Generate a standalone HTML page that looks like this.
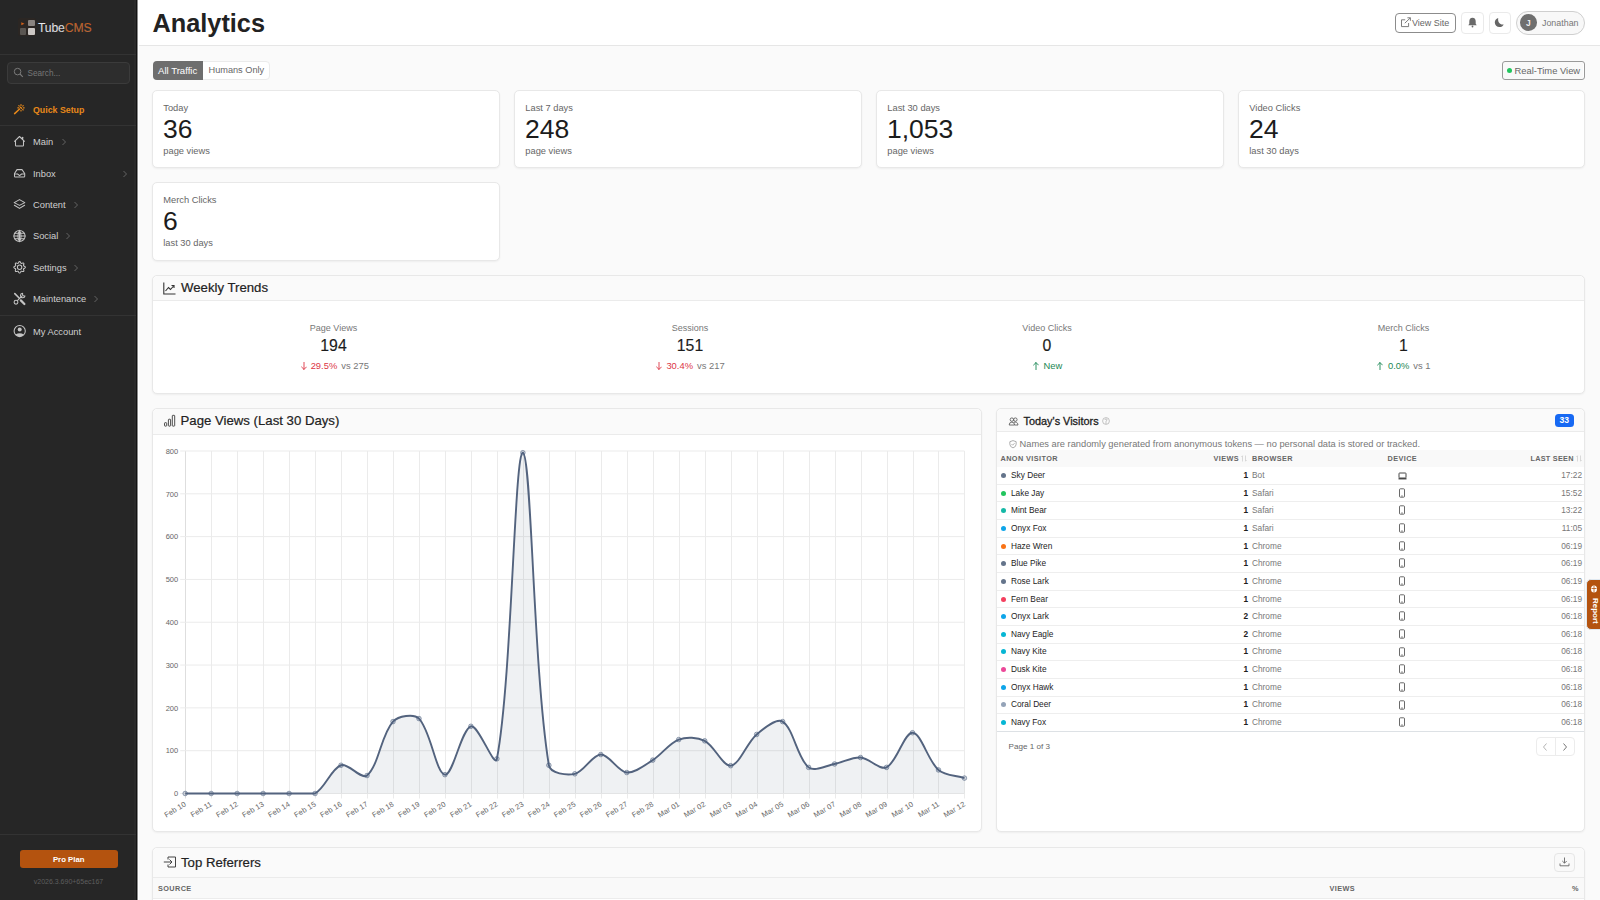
<!DOCTYPE html>
<html><head><meta charset="utf-8">
<style>
*{box-sizing:border-box;margin:0;padding:0}
html,body{width:1600px;height:900px;overflow:hidden;background:#fafafa;font-family:"Liberation Sans",sans-serif;color:#222}
.abs{position:absolute}
.t{position:absolute;white-space:nowrap;line-height:1}
#sb{position:absolute;left:0;top:0;width:137px;height:900px;background:#262626;border-right:1px solid #131313;box-shadow:inset -2px 0 0 #2a2a2a}
.sep{position:absolute;left:0;width:136px;height:1px;background:#333}
.nav{position:absolute;left:33px;font-size:9.3px;color:#cfcfcf;white-space:nowrap;line-height:1}
.nico{position:absolute;left:13px;width:13px;height:13px}
.chev{position:absolute;width:6px;height:8px}
#hdr{position:absolute;left:139px;top:0;width:1461px;height:46px;background:#fff;border-bottom:1px solid #e6e6e6}
.card{position:absolute;background:#fff;border:1px solid #e8e8e8;border-radius:5px;box-shadow:0 1px 2px rgba(0,0,0,0.05)}
.lbl{position:absolute;left:10.3px;font-size:9.3px;color:#666;line-height:1;white-space:nowrap}
.num{position:absolute;left:10px;font-size:26.5px;color:#1c1c1c;line-height:1;white-space:nowrap}
.chead{position:absolute;left:0;top:0;right:0;background:#fafafa;border-bottom:1px solid #ebebeb;border-radius:5px 5px 0 0}
.wk{position:absolute;width:200px;text-align:center;line-height:1;white-space:nowrap}
.wk2{position:absolute;width:200px;display:flex;justify-content:center;align-items:center;height:9px;font-size:9.4px;line-height:1;white-space:nowrap}
.row{position:absolute;left:-1px;width:587px;height:18px;border-bottom:1px solid #eeeeee}
.row .dot{position:absolute;left:3.5px;top:5.8px;width:5px;height:5px;border-radius:50%}
.row .nm{position:absolute;left:14px;top:3.8px;font-size:8.3px;color:#1d1d1d;line-height:1}
.row .vw{position:absolute;right:336px;top:3.8px;font-size:8.3px;color:#1d1d1d;font-weight:700;line-height:1}
.row .br{position:absolute;left:255px;top:3.8px;font-size:8.3px;color:#777;line-height:1}
.row .dv{position:absolute;left:401px;top:3px}
.row .dv svg{display:block}
.row .ls{position:absolute;right:2px;top:3.8px;font-size:8.3px;color:#777;line-height:1}
.th{position:absolute;top:5px;font-size:7.3px;font-weight:700;color:#666;letter-spacing:0.4px;line-height:1;white-space:nowrap}
</style></head><body>
<div id="sb">
  <!-- logo -->
  <div class="abs" style="left:18px;top:18px;width:18px;height:18px;background:#2b2623;border-radius:2px"></div>
  <div class="abs" style="left:20px;top:28px;width:6px;height:6.5px;background:#5a5652;border-radius:1px"></div>
  <div class="abs" style="left:28px;top:20px;width:6.5px;height:6px;background:#8a8480;border-radius:1px"></div>
  <div class="abs" style="left:28px;top:28px;width:6.5px;height:6.5px;background:#cbc7c4;border-radius:1px"></div>
  <svg class="abs" style="left:21px;top:21.5px" width="4" height="4" viewBox="0 0 4 4"><path d="M0.3,0.3 L3.5,1.7 L0.3,3.2Z" fill="#d0601a"/></svg>
  <div class="t" style="left:38px;top:21.8px;font-size:12.2px;letter-spacing:-0.15px;-webkit-text-stroke:0.15px #888"><span style="color:#ebebf0">Tube</span><span style="color:#c65a18">CMS</span></div>
  <div class="sep" style="top:54px"></div>
  <!-- search -->
  <div class="abs" style="left:7px;top:62px;width:123px;height:22px;background:#2d2d2d;border:1px solid #3b3b3b;border-radius:4px"></div>
  <svg class="abs" style="left:13px;top:67px" width="11" height="11" viewBox="0 0 11 11"><circle cx="4.6" cy="4.6" r="3.3" fill="none" stroke="#7a7a7a" stroke-width="1"/><path d="M7,7 L9.8,9.8" stroke="#7a7a7a" stroke-width="1.1"/></svg>
  <div class="t" style="left:27.5px;top:69.5px;font-size:8.2px;color:#777">Search...</div>
  <!-- nav -->
<svg class="abs" style="left:12px;top:102px" width="16" height="16" viewBox="12 102 16 16" fill="none" stroke="#e8891a" stroke-width="1.15" stroke-linecap="round"><path d="M14.6,113.6 L19.6,109" stroke-width="1.5"/><path d="M21,104.6 L21,105.4 M21,110.2 L21,111 M17.8,107.8 L18.6,107.8 M23.4,107.8 L24.2,107.8 M18.8,105.6 L19.3,106.1 M23.2,105.6 L22.7,106.1 M23.2,110 L22.7,109.5"/><path d="M20.4,107.3 L21.6,108.3" stroke-width="1.4"/></svg>
<div class="nav" style="top:105.5px;color:#e8891a;font-weight:700;font-size:8.8px">Quick Setup</div>
<div class="sep" style="top:125px"></div>
<svg class="abs" style="left:12px;top:134px" width="16" height="16" viewBox="12 134 16 16" stroke="#c4c4c4" stroke-width="1.05" fill="none" stroke-linecap="round" stroke-linejoin="round"><path d="M14.5,141.3 L19.5,136.5 L24.5,141.3"/><path d="M15.5,140.5 L15.5,145.3 Q15.5,146 16.2,146 L22.8,146 Q23.5,146 23.5,145.3 L23.5,140.5"/><path d="M22.6,137.3 L22.6,139.3" stroke-width="1.3"/></svg>
<div class="nav" style="top:137.5px">Main</div>
<svg class="chev" style="left:60.5px;top:137.5px" viewBox="0 0 6 8" fill="none" stroke="#6a6a6a" stroke-width="0.9"><path d="M1.5,1 L4.5,4 L1.5,7"/></svg>
<svg class="abs" style="left:12px;top:166px" width="16" height="16" viewBox="12 166 16 16" stroke="#c4c4c4" stroke-width="1.05" fill="none" stroke-linecap="round" stroke-linejoin="round"><path d="M14.5,173.5 L17,169.6 L22,169.6 L24.7,173.5 L24.7,176.2 Q24.7,177 23.9,177 L15.3,177 Q14.5,177 14.5,176.2 Z"/><path d="M14.8,174 L17.6,174 L19.6,175.6 L21.6,174 L24.4,174"/></svg>
<div class="nav" style="top:169.5px">Inbox</div>
<svg class="chev" style="left:122px;top:169.5px" viewBox="0 0 6 8" fill="none" stroke="#6a6a6a" stroke-width="0.9"><path d="M1.5,1 L4.5,4 L1.5,7"/></svg>
<svg class="abs" style="left:12px;top:197px" width="16" height="16" viewBox="12 197 16 16" stroke="#c4c4c4" stroke-width="1.05" fill="none" stroke-linecap="round" stroke-linejoin="round"><path d="M19.5,199.6 L24.8,202.6 L19.5,205.4 L14.2,202.6 Z"/><path d="M14.4,205.3 L19.5,208.4 L24.6,205.3"/></svg>
<div class="nav" style="top:201px">Content</div>
<svg class="chev" style="left:72.5px;top:201px" viewBox="0 0 6 8" fill="none" stroke="#6a6a6a" stroke-width="0.9"><path d="M1.5,1 L4.5,4 L1.5,7"/></svg>
<svg class="abs" style="left:12px;top:228px" width="16" height="16" viewBox="12 228 16 16" stroke="#c4c4c4" stroke-width="1.05" fill="none" stroke-linecap="round" stroke-linejoin="round"><circle cx="19.5" cy="236" r="5.6"/><path d="M13.9,236 L25.1,236 M19.5,230.4 L19.5,241.6 M14.6,233.3 L24.4,233.3 M14.6,238.7 L24.4,238.7"/><path d="M19.5,230.4 Q16.3,236 19.5,241.6 M19.5,230.4 Q22.7,236 19.5,241.6"/></svg>
<div class="nav" style="top:232px">Social</div>
<svg class="chev" style="left:64.5px;top:232px" viewBox="0 0 6 8" fill="none" stroke="#6a6a6a" stroke-width="0.9"><path d="M1.5,1 L4.5,4 L1.5,7"/></svg>
<svg class="abs" style="left:12px;top:259px" width="16" height="16" viewBox="12 259 16 16" stroke="#c4c4c4" stroke-width="1.05" fill="none" stroke-linecap="round" stroke-linejoin="round"><path d="M19.60,261.55 L19.82,261.59 L20.04,261.71 L20.24,261.90 L20.42,262.13 L20.58,262.40 L20.71,262.66 L20.84,262.91 L20.96,263.12 L21.08,263.28 L21.23,263.37 L21.39,263.41 L21.59,263.39 L21.83,263.32 L22.09,263.23 L22.38,263.14 L22.68,263.07 L22.97,263.03 L23.24,263.04 L23.48,263.10 L23.67,263.23 L23.80,263.42 L23.86,263.66 L23.87,263.93 L23.83,264.22 L23.76,264.52 L23.67,264.81 L23.58,265.07 L23.51,265.31 L23.49,265.51 L23.53,265.67 L23.62,265.82 L23.78,265.94 L23.99,266.06 L24.24,266.19 L24.50,266.32 L24.77,266.48 L25.00,266.66 L25.19,266.86 L25.31,267.08 L25.35,267.30 L25.31,267.52 L25.19,267.74 L25.00,267.94 L24.77,268.12 L24.50,268.28 L24.24,268.41 L23.99,268.54 L23.78,268.66 L23.62,268.78 L23.53,268.93 L23.49,269.09 L23.51,269.29 L23.58,269.53 L23.67,269.79 L23.76,270.08 L23.83,270.38 L23.87,270.67 L23.86,270.94 L23.80,271.18 L23.67,271.37 L23.48,271.50 L23.24,271.56 L22.97,271.57 L22.68,271.53 L22.38,271.46 L22.09,271.37 L21.83,271.28 L21.59,271.21 L21.39,271.19 L21.23,271.23 L21.08,271.32 L20.96,271.48 L20.84,271.69 L20.71,271.94 L20.58,272.20 L20.42,272.47 L20.24,272.70 L20.04,272.89 L19.82,273.01 L19.60,273.05 L19.38,273.01 L19.16,272.89 L18.96,272.70 L18.78,272.47 L18.62,272.20 L18.49,271.94 L18.36,271.69 L18.24,271.48 L18.12,271.32 L17.97,271.23 L17.81,271.19 L17.61,271.21 L17.37,271.28 L17.11,271.37 L16.82,271.46 L16.52,271.53 L16.23,271.57 L15.96,271.56 L15.72,271.50 L15.53,271.37 L15.40,271.18 L15.34,270.94 L15.33,270.67 L15.37,270.38 L15.44,270.08 L15.53,269.79 L15.62,269.53 L15.69,269.29 L15.71,269.09 L15.67,268.93 L15.58,268.78 L15.42,268.66 L15.21,268.54 L14.96,268.41 L14.70,268.28 L14.43,268.12 L14.20,267.94 L14.01,267.74 L13.89,267.52 L13.85,267.30 L13.89,267.08 L14.01,266.86 L14.20,266.66 L14.43,266.48 L14.70,266.32 L14.96,266.19 L15.21,266.06 L15.42,265.94 L15.58,265.82 L15.67,265.67 L15.71,265.51 L15.69,265.31 L15.62,265.07 L15.53,264.81 L15.44,264.52 L15.37,264.22 L15.33,263.93 L15.34,263.66 L15.40,263.42 L15.53,263.23 L15.72,263.10 L15.96,263.04 L16.23,263.03 L16.52,263.07 L16.82,263.14 L17.11,263.23 L17.37,263.32 L17.61,263.39 L17.81,263.41 L17.97,263.37 L18.12,263.28 L18.24,263.12 L18.36,262.91 L18.49,262.66 L18.62,262.40 L18.78,262.13 L18.96,261.90 L19.16,261.71 L19.38,261.59 L19.60,261.55Z"/><circle cx="19.6" cy="267.3" r="2.2"/></svg>
<div class="nav" style="top:263.5px">Settings</div>
<svg class="chev" style="left:73px;top:263.5px" viewBox="0 0 6 8" fill="none" stroke="#6a6a6a" stroke-width="0.9"><path d="M1.5,1 L4.5,4 L1.5,7"/></svg>
<svg class="abs" style="left:12px;top:290px" width="16" height="16" viewBox="12 290 16 16" stroke="#c4c4c4" stroke-width="1.05" fill="none" stroke-linecap="round" stroke-linejoin="round"><path d="M14.8,293.6 L19.4,298.2" stroke-width="1.6"/><path d="M20.8,300.4 L24.4,304" stroke-width="2.2"/><path d="M17.6,300.4 L22.2,295.8"/><circle cx="16" cy="302.2" r="1.9"/><path d="M22.6,293.2 A2.3,2.3 0 1 0 25,296 L23.6,296 L22.6,295 Z"/></svg>
<div class="nav" style="top:295px">Maintenance</div>
<svg class="chev" style="left:93px;top:295px" viewBox="0 0 6 8" fill="none" stroke="#6a6a6a" stroke-width="0.9"><path d="M1.5,1 L4.5,4 L1.5,7"/></svg>
<div class="sep" style="top:315px"></div>
<svg class="abs" style="left:12px;top:323px" width="16" height="16" viewBox="12 323 16 16"><circle cx="19.7" cy="331" r="5.6" fill="none" stroke="#c4c4c4" stroke-width="1.05"/><circle cx="19.7" cy="329.6" r="2" fill="#c4c4c4"/><path d="M15.6,334.6 Q19.7,331.8 23.8,334.6 Q22.2,336.7 19.7,336.7 Q17.2,336.7 15.6,334.6 Z" fill="#c4c4c4"/></svg>
<div class="nav" style="top:327.5px">My Account</div>
  <!-- footer -->
  <div class="sep" style="top:834px"></div>
  <div class="abs" style="left:20px;top:850px;width:97.5px;height:17.5px;background:#b4530f;border-radius:3px"></div>
  <div class="t" style="left:20px;width:97.5px;text-align:center;top:855.8px;font-size:7.8px;font-weight:700;color:#fff">Pro Plan</div>
  <div class="t" style="left:0;width:137px;text-align:center;top:877.5px;font-size:7px;color:#5e5e5e">v2026.3.690+65ec167</div>
</div>

<div id="hdr">
  <div class="t" style="left:13.5px;top:10.8px;font-size:25.3px;font-weight:700;color:#222">Analytics</div>
  <!-- view site -->
  <div class="abs" style="left:1256px;top:13px;width:61px;height:20px;border:1.3px solid #8c8c8c;border-radius:4px;background:#fff"></div>
  <svg class="abs" style="left:1260.5px;top:17px" width="12" height="11" viewBox="0 0 12 11" fill="none" stroke="#777" stroke-width="0.95"><path d="M5.2,2.8 L1.5,2.8 L1.5,9.6 L8.6,9.6 L8.6,6"/><path d="M4.8,6.2 L10.3,0.9 M7.4,0.8 L10.4,0.8 L10.4,3.8"/></svg>
  <div class="t" style="left:1273px;top:18.5px;font-size:9px;color:#666">View Site</div>
  <!-- bell -->
  <div class="abs" style="left:1322px;top:11.5px;width:22.5px;height:22px;border:1px solid #eaeaea;border-radius:4px;background:#fff"></div>
  <svg class="abs" style="left:1328px;top:17px" width="11" height="11" viewBox="0 0 11 11"><path d="M5.5,0.8 C3.3,0.8 2.3,2.5 2.3,4.5 L2.3,6.8 L1.3,8.2 L9.7,8.2 L8.7,6.8 L8.7,4.5 C8.7,2.5 7.7,0.8 5.5,0.8Z" fill="#6a6a6a"/><circle cx="5.5" cy="9.5" r="0.9" fill="#6a6a6a"/></svg>
  <!-- moon -->
  <div class="abs" style="left:1350px;top:11.5px;width:22px;height:22px;border:1px solid #eaeaea;border-radius:4px;background:#fff"></div>
  <svg class="abs" style="left:1355px;top:17px" width="11" height="11" viewBox="0 0 11 11"><path d="M4.2,1 C2,1.6 0.8,3.5 0.8,5.6 C0.8,8.3 2.9,10.1 5.4,10.1 C7.4,10.1 9,9 9.7,7.4 C6.6,8.2 3.5,5.8 4.2,1Z" fill="#666"/></svg>
  <!-- user pill -->
  <div class="abs" style="left:1377px;top:10.5px;width:69px;height:24px;border:1.3px solid #cfcfcf;border-radius:12px;background:#f8f8f8"></div>
  <div class="abs" style="left:1380.5px;top:14px;width:17.5px;height:17px;border-radius:50%;background:#6f6f6f"></div>
  <div class="t" style="left:1380.5px;width:17.5px;text-align:center;top:18.5px;font-size:8.5px;font-weight:700;color:#eee">J</div>
  <div class="t" style="left:1403px;top:18.8px;font-size:8.9px;color:#777">Jonathan</div>
</div>

<div class="abs" style="left:137px;top:0;width:1px;height:900px;background:#8a8a8a"></div>
<div class="abs" style="left:138px;top:0;width:1px;height:900px;background:#fff"></div>
<!-- filters -->
<div class="abs" style="left:152.5px;top:60.5px;width:117px;height:19.5px;border:1px solid #ebebeb;border-radius:4px;background:#fff"></div>
<div class="abs" style="left:152.5px;top:60.5px;width:50.5px;height:19.5px;background:#6e6e6e;border-radius:4px 0 0 4px"></div>
<div class="t" style="left:158px;top:65.5px;font-size:9.6px;color:#fff">All Traffic</div>
<div class="t" style="left:208.5px;top:66.2px;font-size:9.2px;color:#666">Humans Only</div>
<!-- real-time -->
<div class="abs" style="left:1502px;top:61px;width:83px;height:19px;border:1.2px solid #9a9a9a;border-radius:3px;background:#f9f9f9;box-shadow:inset -1px 0 0 #fff"></div>
<div class="abs" style="left:1507px;top:68px;width:5px;height:5px;border-radius:50%;background:#22c55e"></div>
<div class="t" style="left:1514.5px;top:66px;font-size:9.4px;color:#666">Real-Time View</div>

<!-- stat cards -->
<div class="card" style="left:152px;top:90px;width:348px;height:78px">
  <div class="lbl" style="top:13px">Today</div><div class="num" style="top:24.5px">36</div><div class="lbl" style="top:56px">page views</div></div>
<div class="card" style="left:514px;top:90px;width:348px;height:78px">
  <div class="lbl" style="top:13px">Last 7 days</div><div class="num" style="top:24.5px">248</div><div class="lbl" style="top:56px">page views</div></div>
<div class="card" style="left:876px;top:90px;width:348px;height:78px">
  <div class="lbl" style="top:13px">Last 30 days</div><div class="num" style="top:24.5px">1,053</div><div class="lbl" style="top:56px">page views</div></div>
<div class="card" style="left:1238px;top:90px;width:347px;height:78px">
  <div class="lbl" style="top:13px">Video Clicks</div><div class="num" style="top:24.5px">24</div><div class="lbl" style="top:56px">last 30 days</div></div>
<div class="card" style="left:152px;top:182px;width:348px;height:79px">
  <div class="lbl" style="top:13px">Merch Clicks</div><div class="num" style="top:24.5px">6</div><div class="lbl" style="top:56px">last 30 days</div></div>

<!-- weekly trends -->
<div class="card" style="left:152px;top:275px;width:1433px;height:119px"><div class="chead" style="height:25px"></div></div>
<svg class="abs" style="left:163px;top:282px" width="13" height="13" viewBox="0 0 13 13" fill="none" stroke="#333" stroke-width="1.1"><path d="M0.8,0.5 L0.8,12 L12.5,12"/><path d="M2.5,9 L5.5,5.5 L7.5,7.5 L11,3.5"/><path d="M8.5,3.5 L11,3.5 L11,6"/></svg>
<div class="t" style="left:181px;top:280.5px;font-size:13.2px;color:#222;-webkit-text-stroke:0.2px #222">Weekly Trends</div>
<div class="wk" style="left:233.5px;top:324px;font-size:9px;color:#777">Page Views</div>
<div class="wk" style="left:233.5px;top:338px;font-size:15.8px;color:#1c1c1c;-webkit-text-stroke:0.15px #1c1c1c">194</div>
<div class="wk2" style="left:234.75px;top:361px"><svg width="6" height="8" viewBox="0 0 6 8" style="display:block;margin-right:4px" fill="none" stroke="#dc3545" stroke-width="0.9" stroke-linecap="round"><path d="M3,0.4 L3,7.4 M0.6,5 L3,7.4 L5.4,5"/></svg><span style="color:#dc3545">29.5%</span><span style="color:#777;margin-left:4px">vs 275</span></div>
<div class="wk" style="left:590px;top:324px;font-size:9px;color:#777">Sessions</div>
<div class="wk" style="left:590px;top:338px;font-size:15.8px;color:#1c1c1c;-webkit-text-stroke:0.15px #1c1c1c">151</div>
<div class="wk2" style="left:590.5px;top:361px"><svg width="6" height="8" viewBox="0 0 6 8" style="display:block;margin-right:4px" fill="none" stroke="#dc3545" stroke-width="0.9" stroke-linecap="round"><path d="M3,0.4 L3,7.4 M0.6,5 L3,7.4 L5.4,5"/></svg><span style="color:#dc3545">30.4%</span><span style="color:#777;margin-left:4px">vs 217</span></div>
<div class="wk" style="left:947px;top:324px;font-size:9px;color:#777">Video Clicks</div>
<div class="wk" style="left:947px;top:338px;font-size:15.8px;color:#1c1c1c;-webkit-text-stroke:0.15px #1c1c1c">0</div>
<div class="wk2" style="left:947.7px;top:361px"><svg width="6" height="8" viewBox="0 0 6 8" style="display:block;margin-right:4.5px" fill="none" stroke="#198754" stroke-width="0.9" stroke-linecap="round"><path d="M3,7.6 L3,0.6 M0.6,3 L3,0.6 L5.4,3"/></svg><span style="color:#198754">New</span></div>
<div class="wk" style="left:1303.5px;top:324px;font-size:9px;color:#777">Merch Clicks</div>
<div class="wk" style="left:1303.5px;top:338px;font-size:15.8px;color:#1c1c1c;-webkit-text-stroke:0.15px #1c1c1c">1</div>
<div class="wk2" style="left:1304px;top:361px"><svg width="6" height="8" viewBox="0 0 6 8" style="display:block;margin-right:4.5px" fill="none" stroke="#198754" stroke-width="0.9" stroke-linecap="round"><path d="M3,7.6 L3,0.6 M0.6,3 L3,0.6 L5.4,3"/></svg><span style="color:#198754">0.0%</span><span style="color:#777;margin-left:4px">vs 1</span></div>

<!-- chart card -->
<div class="card" style="left:152px;top:408px;width:830px;height:424px"><div class="chead" style="height:26px"></div></div>
<svg class="abs" style="left:163px;top:414px" width="13" height="13" viewBox="0 0 13 13" fill="none" stroke="#3a3a3a" stroke-width="0.9"><rect x="1.5" y="8.7" width="2.2" height="3.4" rx="0.6"/><rect x="5.4" y="5.2" width="2.2" height="6.9" rx="0.6"/><rect x="9.3" y="1.3" width="2.4" height="10.8" rx="0.6"/></svg>
<div class="t" style="left:180.5px;top:414px;font-size:13.2px;color:#222;-webkit-text-stroke:0.2px #222">Page Views (Last 30 Days)</div>
<svg class="abs" style="left:0;top:0" width="1600" height="900" viewBox="0 0 1600 900">
<g stroke="#ebebeb" stroke-width="1"><line x1="185.50" y1="451.00" x2="185.50" y2="798.50" stroke="#dedede"/><line x1="211.50" y1="451.00" x2="211.50" y2="798.50"/><line x1="237.50" y1="451.00" x2="237.50" y2="798.50"/><line x1="263.50" y1="451.00" x2="263.50" y2="798.50"/><line x1="289.50" y1="451.00" x2="289.50" y2="798.50"/><line x1="315.50" y1="451.00" x2="315.50" y2="798.50"/><line x1="341.50" y1="451.00" x2="341.50" y2="798.50"/><line x1="367.50" y1="451.00" x2="367.50" y2="798.50"/><line x1="393.50" y1="451.00" x2="393.50" y2="798.50"/><line x1="419.50" y1="451.00" x2="419.50" y2="798.50"/><line x1="445.50" y1="451.00" x2="445.50" y2="798.50"/><line x1="471.50" y1="451.00" x2="471.50" y2="798.50"/><line x1="497.50" y1="451.00" x2="497.50" y2="798.50"/><line x1="523.50" y1="451.00" x2="523.50" y2="798.50"/><line x1="549.50" y1="451.00" x2="549.50" y2="798.50"/><line x1="575.50" y1="451.00" x2="575.50" y2="798.50"/><line x1="601.50" y1="451.00" x2="601.50" y2="798.50"/><line x1="627.50" y1="451.00" x2="627.50" y2="798.50"/><line x1="653.50" y1="451.00" x2="653.50" y2="798.50"/><line x1="679.50" y1="451.00" x2="679.50" y2="798.50"/><line x1="705.50" y1="451.00" x2="705.50" y2="798.50"/><line x1="731.50" y1="451.00" x2="731.50" y2="798.50"/><line x1="757.50" y1="451.00" x2="757.50" y2="798.50"/><line x1="783.50" y1="451.00" x2="783.50" y2="798.50"/><line x1="809.50" y1="451.00" x2="809.50" y2="798.50"/><line x1="835.50" y1="451.00" x2="835.50" y2="798.50"/><line x1="861.50" y1="451.00" x2="861.50" y2="798.50"/><line x1="887.50" y1="451.00" x2="887.50" y2="798.50"/><line x1="913.50" y1="451.00" x2="913.50" y2="798.50"/><line x1="938.50" y1="451.00" x2="938.50" y2="798.50"/><line x1="964.50" y1="451.00" x2="964.50" y2="798.50"/><line x1="180.20" y1="793.50" x2="964.45" y2="793.50"/><line x1="180.20" y1="750.69" x2="964.45" y2="750.69"/><line x1="180.20" y1="707.88" x2="964.45" y2="707.88"/><line x1="180.20" y1="665.06" x2="964.45" y2="665.06"/><line x1="180.20" y1="622.25" x2="964.45" y2="622.25"/><line x1="180.20" y1="579.44" x2="964.45" y2="579.44"/><line x1="180.20" y1="536.63" x2="964.45" y2="536.63"/><line x1="180.20" y1="493.82" x2="964.45" y2="493.82"/><line x1="180.20" y1="451.00" x2="964.45" y2="451.00"/></g>
<path d="M185.20,793.50 C193.77,793.50 202.60,793.50 211.17,793.50 C219.75,793.50 228.58,793.50 237.15,793.50 C245.72,793.50 254.55,793.50 263.12,793.50 C271.70,793.50 280.53,793.50 289.10,793.50 C297.67,793.50 308.16,793.50 315.07,793.50 C325.30,787.94 331.13,768.68 341.05,765.24 C348.27,762.74 361.57,780.10 367.02,775.52 C378.71,765.69 381.07,734.65 393.00,721.58 C398.21,715.86 413.88,713.37 418.98,718.58 C431.02,730.89 435.87,773.32 444.95,774.66 C453.02,775.86 461.17,729.26 470.93,726.29 C478.32,724.03 494.85,769.60 496.90,758.82 C512.00,679.32 514.39,451.67 522.88,452.72 C531.54,453.79 533.08,667.78 548.85,765.24 C550.23,773.74 566.97,775.42 574.83,773.81 C584.11,771.89 592.13,754.76 600.80,754.54 C609.27,754.33 617.81,771.56 626.78,772.52 C634.95,773.40 644.78,765.17 652.75,760.11 C661.92,754.29 669.12,743.12 678.73,739.56 C686.27,736.76 697.50,737.22 704.70,740.84 C714.65,745.84 722.63,766.67 730.67,765.67 C739.77,764.55 746.64,742.91 756.65,734.42 C763.79,728.36 776.54,717.71 782.62,721.58 C793.68,728.59 797.15,758.04 808.60,767.38 C814.30,772.03 826.09,765.57 834.58,763.96 C843.24,762.32 852.14,756.98 860.55,757.54 C869.28,758.11 879.83,770.59 886.53,767.38 C896.97,762.39 904.13,732.29 912.50,732.71 C921.27,733.14 927.76,760.59 938.48,769.95 C944.90,775.57 955.88,775.40 964.45,778.09 L964.45,793.5 L185.20,793.5 Z" fill="rgba(74,95,126,0.09)"/>
<path d="M185.20,793.50 C193.77,793.50 202.60,793.50 211.17,793.50 C219.75,793.50 228.58,793.50 237.15,793.50 C245.72,793.50 254.55,793.50 263.12,793.50 C271.70,793.50 280.53,793.50 289.10,793.50 C297.67,793.50 308.16,793.50 315.07,793.50 C325.30,787.94 331.13,768.68 341.05,765.24 C348.27,762.74 361.57,780.10 367.02,775.52 C378.71,765.69 381.07,734.65 393.00,721.58 C398.21,715.86 413.88,713.37 418.98,718.58 C431.02,730.89 435.87,773.32 444.95,774.66 C453.02,775.86 461.17,729.26 470.93,726.29 C478.32,724.03 494.85,769.60 496.90,758.82 C512.00,679.32 514.39,451.67 522.88,452.72 C531.54,453.79 533.08,667.78 548.85,765.24 C550.23,773.74 566.97,775.42 574.83,773.81 C584.11,771.89 592.13,754.76 600.80,754.54 C609.27,754.33 617.81,771.56 626.78,772.52 C634.95,773.40 644.78,765.17 652.75,760.11 C661.92,754.29 669.12,743.12 678.73,739.56 C686.27,736.76 697.50,737.22 704.70,740.84 C714.65,745.84 722.63,766.67 730.67,765.67 C739.77,764.55 746.64,742.91 756.65,734.42 C763.79,728.36 776.54,717.71 782.62,721.58 C793.68,728.59 797.15,758.04 808.60,767.38 C814.30,772.03 826.09,765.57 834.58,763.96 C843.24,762.32 852.14,756.98 860.55,757.54 C869.28,758.11 879.83,770.59 886.53,767.38 C896.97,762.39 904.13,732.29 912.50,732.71 C921.27,733.14 927.76,760.59 938.48,769.95 C944.90,775.57 955.88,775.40 964.45,778.09" fill="none" stroke="#53637e" stroke-width="1.9"/>
<g fill="rgba(74,95,126,0.25)" stroke="rgba(74,95,126,0.55)" stroke-width="1"><circle cx="185.20" cy="793.50" r="2.3"/><circle cx="211.17" cy="793.50" r="2.3"/><circle cx="237.15" cy="793.50" r="2.3"/><circle cx="263.12" cy="793.50" r="2.3"/><circle cx="289.10" cy="793.50" r="2.3"/><circle cx="315.07" cy="793.50" r="2.3"/><circle cx="341.05" cy="765.24" r="2.3"/><circle cx="367.02" cy="775.52" r="2.3"/><circle cx="393.00" cy="721.58" r="2.3"/><circle cx="418.98" cy="718.58" r="2.3"/><circle cx="444.95" cy="774.66" r="2.3"/><circle cx="470.93" cy="726.29" r="2.3"/><circle cx="496.90" cy="758.82" r="2.3"/><circle cx="522.88" cy="452.72" r="2.3"/><circle cx="548.85" cy="765.24" r="2.3"/><circle cx="574.83" cy="773.81" r="2.3"/><circle cx="600.80" cy="754.54" r="2.3"/><circle cx="626.78" cy="772.52" r="2.3"/><circle cx="652.75" cy="760.11" r="2.3"/><circle cx="678.73" cy="739.56" r="2.3"/><circle cx="704.70" cy="740.84" r="2.3"/><circle cx="730.67" cy="765.67" r="2.3"/><circle cx="756.65" cy="734.42" r="2.3"/><circle cx="782.62" cy="721.58" r="2.3"/><circle cx="808.60" cy="767.38" r="2.3"/><circle cx="834.58" cy="763.96" r="2.3"/><circle cx="860.55" cy="757.54" r="2.3"/><circle cx="886.53" cy="767.38" r="2.3"/><circle cx="912.50" cy="732.71" r="2.3"/><circle cx="938.48" cy="769.95" r="2.3"/><circle cx="964.45" cy="778.09" r="2.3"/></g>
<g font-family="Liberation Sans" font-size="7.5" fill="#666"><text x="178.20" y="796.30" text-anchor="end">0</text><text x="178.20" y="753.49" text-anchor="end">100</text><text x="178.20" y="710.68" text-anchor="end">200</text><text x="178.20" y="667.86" text-anchor="end">300</text><text x="178.20" y="625.05" text-anchor="end">400</text><text x="178.20" y="582.24" text-anchor="end">500</text><text x="178.20" y="539.43" text-anchor="end">600</text><text x="178.20" y="496.62" text-anchor="end">700</text><text x="178.20" y="453.80" text-anchor="end">800</text></g>
<g font-family="Liberation Sans" font-size="7.5" fill="#666" letter-spacing="0.1"><text transform="translate(186.70,805.50) rotate(-31)" text-anchor="end">Feb 10</text><text transform="translate(212.67,805.50) rotate(-31)" text-anchor="end">Feb 11</text><text transform="translate(238.65,805.50) rotate(-31)" text-anchor="end">Feb 12</text><text transform="translate(264.62,805.50) rotate(-31)" text-anchor="end">Feb 13</text><text transform="translate(290.60,805.50) rotate(-31)" text-anchor="end">Feb 14</text><text transform="translate(316.57,805.50) rotate(-31)" text-anchor="end">Feb 15</text><text transform="translate(342.55,805.50) rotate(-31)" text-anchor="end">Feb 16</text><text transform="translate(368.52,805.50) rotate(-31)" text-anchor="end">Feb 17</text><text transform="translate(394.50,805.50) rotate(-31)" text-anchor="end">Feb 18</text><text transform="translate(420.48,805.50) rotate(-31)" text-anchor="end">Feb 19</text><text transform="translate(446.45,805.50) rotate(-31)" text-anchor="end">Feb 20</text><text transform="translate(472.43,805.50) rotate(-31)" text-anchor="end">Feb 21</text><text transform="translate(498.40,805.50) rotate(-31)" text-anchor="end">Feb 22</text><text transform="translate(524.38,805.50) rotate(-31)" text-anchor="end">Feb 23</text><text transform="translate(550.35,805.50) rotate(-31)" text-anchor="end">Feb 24</text><text transform="translate(576.33,805.50) rotate(-31)" text-anchor="end">Feb 25</text><text transform="translate(602.30,805.50) rotate(-31)" text-anchor="end">Feb 26</text><text transform="translate(628.28,805.50) rotate(-31)" text-anchor="end">Feb 27</text><text transform="translate(654.25,805.50) rotate(-31)" text-anchor="end">Feb 28</text><text transform="translate(680.23,805.50) rotate(-31)" text-anchor="end">Mar 01</text><text transform="translate(706.20,805.50) rotate(-31)" text-anchor="end">Mar 02</text><text transform="translate(732.17,805.50) rotate(-31)" text-anchor="end">Mar 03</text><text transform="translate(758.15,805.50) rotate(-31)" text-anchor="end">Mar 04</text><text transform="translate(784.12,805.50) rotate(-31)" text-anchor="end">Mar 05</text><text transform="translate(810.10,805.50) rotate(-31)" text-anchor="end">Mar 06</text><text transform="translate(836.08,805.50) rotate(-31)" text-anchor="end">Mar 07</text><text transform="translate(862.05,805.50) rotate(-31)" text-anchor="end">Mar 08</text><text transform="translate(888.03,805.50) rotate(-31)" text-anchor="end">Mar 09</text><text transform="translate(914.00,805.50) rotate(-31)" text-anchor="end">Mar 10</text><text transform="translate(939.98,805.50) rotate(-31)" text-anchor="end">Mar 11</text><text transform="translate(965.95,805.50) rotate(-31)" text-anchor="end">Mar 12</text></g>
</svg>

<!-- visitors card -->
<div class="card" style="left:996px;top:408px;width:589px;height:424px">
  <div class="chead" style="height:23px"></div>
<div class="abs" style="left:1px;top:0;width:586px;height:422px">
  <svg class="abs" style="left:9.5px;top:7.5px" width="11" height="9" viewBox="0 0 12 11" fill="none" stroke="#444" stroke-width="0.9"><circle cx="4" cy="3.2" r="2.1"/><circle cx="8.3" cy="3.2" r="2.1"/><path d="M0.7,9.8 Q0.7,6.3 4,6.3 Q7.3,6.3 7.3,9.8 Z"/><path d="M6.5,6.5 Q8.3,6.1 9.5,6.5 Q11.5,7.3 11.5,9.8 L7.5,9.8"/></svg>
  <div class="t" style="left:25.5px;top:6.7px;font-size:10.9px;color:#222;-webkit-text-stroke:0.3px #222">Today's Visitors</div>
  <svg class="abs" style="left:104px;top:8px" width="8" height="8" viewBox="0 0 8 8" fill="none" stroke="#aaa" stroke-width="0.7"><circle cx="4" cy="4" r="3.4"/><path d="M2.9,3 Q2.9,1.9 4,1.9 Q5.1,1.9 5.1,2.9 Q5.1,3.6 4,4 L4,4.9"/><circle cx="4" cy="6" r="0.3" fill="#aaa"/></svg>
  <div class="abs" style="left:556.5px;top:5px;width:19.5px;height:12.5px;border-radius:3.5px;background:#1769f3"></div>
  <div class="t" style="left:556.5px;width:19.5px;text-align:center;top:7px;font-size:8.6px;color:#fff;font-weight:700">33</div>
  <svg class="abs" style="left:10.5px;top:31px" width="8" height="8.5" viewBox="0 0 9 10" fill="none" stroke="#888" stroke-width="0.8"><path d="M4.5,0.7 L8.2,2 L8.2,5 Q8.2,8 4.5,9.3 Q0.8,8 0.8,5 L0.8,2 Z"/><path d="M2.8,4.9 L4,6.1 L6.3,3.8"/></svg>
  <div class="t" style="left:21.5px;top:31px;font-size:9.3px;color:#777">Names are randomly generated from anonymous tokens — no personal data is stored or tracked.</div>
  <div class="abs" style="left:-1px;top:41px;width:587px;height:17px;background:#f9f9f9"></div>
  <div class="th" style="left:2.5px;top:46px">ANON VISITOR</div>
  <div class="th" style="left:215.5px;top:46px">VIEWS</div>
  <svg class="abs" style="left:243px;top:45.5px" width="6" height="7" viewBox="0 0 6 7" fill="none" stroke="#ccc" stroke-width="0.7"><path d="M1.5,6.5 L1.5,0.8 L0.3,2 M4.5,0.5 L4.5,6.2 L5.7,5"/></svg>
  <div class="th" style="left:254px;top:46px">BROWSER</div>
  <div class="th" style="left:389.5px;top:46px">DEVICE</div>
  <div class="th" style="left:532.5px;top:46px;letter-spacing:0.25px">LAST SEEN</div>
  <svg class="abs" style="left:578px;top:45.5px" width="6" height="7" viewBox="0 0 6 7" fill="none" stroke="#ccc" stroke-width="0.7"><path d="M1.5,6.5 L1.5,0.8 L0.3,2 M4.5,0.5 L4.5,6.2 L5.7,5"/></svg>
  <div class="row" style="top:58.10px;height:17.66px"><div class="dot" style="background:#64748b"></div><div class="nm">Sky Deer</div><div class="vw">1</div><div class="br">Bot</div><div class="dv"><svg style="margin-top:1.5px" width="9" height="8" viewBox="0 0 9 8" fill="none" stroke="#333" stroke-width="0.9"><rect x="1" y="1" width="7" height="5" rx="0.6"/><path d="M0.5,6.8 L8.5,6.8" stroke-width="1.2"/></svg></div><div class="ls">17:22</div></div>
<div class="row" style="top:75.76px;height:17.66px"><div class="dot" style="background:#22c55e"></div><div class="nm">Lake Jay</div><div class="vw">1</div><div class="br">Safari</div><div class="dv"><svg width="8" height="10" viewBox="0 0 8 10" fill="none" stroke="#444" stroke-width="0.8"><rect x="1.5" y="0.8" width="5" height="8.4" rx="0.9"/><path d="M3.3,8 L4.7,8"/></svg></div><div class="ls">15:52</div></div>
<div class="row" style="top:93.42px;height:17.66px"><div class="dot" style="background:#14b8a6"></div><div class="nm">Mint Bear</div><div class="vw">1</div><div class="br">Safari</div><div class="dv"><svg width="8" height="10" viewBox="0 0 8 10" fill="none" stroke="#444" stroke-width="0.8"><rect x="1.5" y="0.8" width="5" height="8.4" rx="0.9"/><path d="M3.3,8 L4.7,8"/></svg></div><div class="ls">13:22</div></div>
<div class="row" style="top:111.08px;height:17.66px"><div class="dot" style="background:#0ea5e9"></div><div class="nm">Onyx Fox</div><div class="vw">1</div><div class="br">Safari</div><div class="dv"><svg width="8" height="10" viewBox="0 0 8 10" fill="none" stroke="#444" stroke-width="0.8"><rect x="1.5" y="0.8" width="5" height="8.4" rx="0.9"/><path d="M3.3,8 L4.7,8"/></svg></div><div class="ls">11:05</div></div>
<div class="row" style="top:128.74px;height:17.66px"><div class="dot" style="background:#f97316"></div><div class="nm">Haze Wren</div><div class="vw">1</div><div class="br">Chrome</div><div class="dv"><svg width="8" height="10" viewBox="0 0 8 10" fill="none" stroke="#444" stroke-width="0.8"><rect x="1.5" y="0.8" width="5" height="8.4" rx="0.9"/><path d="M3.3,8 L4.7,8"/></svg></div><div class="ls">06:19</div></div>
<div class="row" style="top:146.40px;height:17.66px"><div class="dot" style="background:#64748b"></div><div class="nm">Blue Pike</div><div class="vw">1</div><div class="br">Chrome</div><div class="dv"><svg width="8" height="10" viewBox="0 0 8 10" fill="none" stroke="#444" stroke-width="0.8"><rect x="1.5" y="0.8" width="5" height="8.4" rx="0.9"/><path d="M3.3,8 L4.7,8"/></svg></div><div class="ls">06:19</div></div>
<div class="row" style="top:164.06px;height:17.66px"><div class="dot" style="background:#64748b"></div><div class="nm">Rose Lark</div><div class="vw">1</div><div class="br">Chrome</div><div class="dv"><svg width="8" height="10" viewBox="0 0 8 10" fill="none" stroke="#444" stroke-width="0.8"><rect x="1.5" y="0.8" width="5" height="8.4" rx="0.9"/><path d="M3.3,8 L4.7,8"/></svg></div><div class="ls">06:19</div></div>
<div class="row" style="top:181.72px;height:17.66px"><div class="dot" style="background:#f43f5e"></div><div class="nm">Fern Bear</div><div class="vw">1</div><div class="br">Chrome</div><div class="dv"><svg width="8" height="10" viewBox="0 0 8 10" fill="none" stroke="#444" stroke-width="0.8"><rect x="1.5" y="0.8" width="5" height="8.4" rx="0.9"/><path d="M3.3,8 L4.7,8"/></svg></div><div class="ls">06:19</div></div>
<div class="row" style="top:199.38px;height:17.66px"><div class="dot" style="background:#0ea5e9"></div><div class="nm">Onyx Lark</div><div class="vw">2</div><div class="br">Chrome</div><div class="dv"><svg width="8" height="10" viewBox="0 0 8 10" fill="none" stroke="#444" stroke-width="0.8"><rect x="1.5" y="0.8" width="5" height="8.4" rx="0.9"/><path d="M3.3,8 L4.7,8"/></svg></div><div class="ls">06:18</div></div>
<div class="row" style="top:217.04px;height:17.66px"><div class="dot" style="background:#06b6d4"></div><div class="nm">Navy Eagle</div><div class="vw">2</div><div class="br">Chrome</div><div class="dv"><svg width="8" height="10" viewBox="0 0 8 10" fill="none" stroke="#444" stroke-width="0.8"><rect x="1.5" y="0.8" width="5" height="8.4" rx="0.9"/><path d="M3.3,8 L4.7,8"/></svg></div><div class="ls">06:18</div></div>
<div class="row" style="top:234.70px;height:17.66px"><div class="dot" style="background:#06b6d4"></div><div class="nm">Navy Kite</div><div class="vw">1</div><div class="br">Chrome</div><div class="dv"><svg width="8" height="10" viewBox="0 0 8 10" fill="none" stroke="#444" stroke-width="0.8"><rect x="1.5" y="0.8" width="5" height="8.4" rx="0.9"/><path d="M3.3,8 L4.7,8"/></svg></div><div class="ls">06:18</div></div>
<div class="row" style="top:252.36px;height:17.66px"><div class="dot" style="background:#ec4899"></div><div class="nm">Dusk Kite</div><div class="vw">1</div><div class="br">Chrome</div><div class="dv"><svg width="8" height="10" viewBox="0 0 8 10" fill="none" stroke="#444" stroke-width="0.8"><rect x="1.5" y="0.8" width="5" height="8.4" rx="0.9"/><path d="M3.3,8 L4.7,8"/></svg></div><div class="ls">06:18</div></div>
<div class="row" style="top:270.02px;height:17.66px"><div class="dot" style="background:#0ea5e9"></div><div class="nm">Onyx Hawk</div><div class="vw">1</div><div class="br">Chrome</div><div class="dv"><svg width="8" height="10" viewBox="0 0 8 10" fill="none" stroke="#444" stroke-width="0.8"><rect x="1.5" y="0.8" width="5" height="8.4" rx="0.9"/><path d="M3.3,8 L4.7,8"/></svg></div><div class="ls">06:18</div></div>
<div class="row" style="top:287.68px;height:17.66px"><div class="dot" style="background:#94a3b8"></div><div class="nm">Coral Deer</div><div class="vw">1</div><div class="br">Chrome</div><div class="dv"><svg width="8" height="10" viewBox="0 0 8 10" fill="none" stroke="#444" stroke-width="0.8"><rect x="1.5" y="0.8" width="5" height="8.4" rx="0.9"/><path d="M3.3,8 L4.7,8"/></svg></div><div class="ls">06:18</div></div>
<div class="row" style="top:305.34px;height:17.66px;border-bottom-color:#dde1e5"><div class="dot" style="background:#06b6d4"></div><div class="nm">Navy Fox</div><div class="vw">1</div><div class="br">Chrome</div><div class="dv"><svg width="8" height="10" viewBox="0 0 8 10" fill="none" stroke="#444" stroke-width="0.8"><rect x="1.5" y="0.8" width="5" height="8.4" rx="0.9"/><path d="M3.3,8 L4.7,8"/></svg></div><div class="ls">06:18</div></div>

  <div class="t" style="left:10.5px;top:334px;font-size:8.1px;color:#666">Page 1 of 3</div>
  <div class="abs" style="left:537.5px;top:328.3px;width:39px;height:19px;border:1px solid #ececec;border-radius:4px;background:#fff"></div>
  <div class="abs" style="left:556.5px;top:328.3px;width:1px;height:19px;background:#ececec"></div>
  <svg class="abs" style="left:542.5px;top:332.8px" width="8" height="10" viewBox="0 0 8 10" fill="none" stroke="#aaa" stroke-width="0.9"><path d="M5.5,1.5 L2.5,5 L5.5,8.5"/></svg>
  <svg class="abs" style="left:562.5px;top:332.8px" width="8" height="10" viewBox="0 0 8 10" fill="none" stroke="#666" stroke-width="0.9"><path d="M2.5,1.5 L5.5,5 L2.5,8.5"/></svg>
</div>
</div>

<!-- referrers card -->
<div class="card" style="left:152px;top:847px;width:1433px;height:80px">
  <div class="chead" style="height:30px"></div>
  <div class="abs" style="left:0;top:30px;width:1431px;height:21px;background:#f9f9f9;border-bottom:1px solid #ececec"></div>
</div>
<svg class="abs" style="left:163px;top:856px" width="14" height="12" viewBox="0 0 14 12" fill="none" stroke="#444" stroke-width="1"><path d="M5,1 L12.5,1 L12.5,11 L5,11 L5,8.5 M5,3.5 L5,1"/><path d="M0.8,6 L9,6 M6.5,3.5 L9,6 L6.5,8.5"/></svg>
<div class="t" style="left:181px;top:855.5px;font-size:13.2px;color:#222;-webkit-text-stroke:0.2px #222">Top Referrers</div>
<div class="abs" style="left:1554px;top:852.5px;width:20.5px;height:19.5px;border:1px solid #e6e6e6;border-radius:4px;background:#f9f9f9"></div>
<svg class="abs" style="left:1559px;top:857px" width="11" height="10" viewBox="0 0 11 10" fill="none" stroke="#666" stroke-width="0.9"><path d="M5.5,0.5 L5.5,6 M3.3,4 L5.5,6.2 L7.7,4"/><path d="M1,6.5 L1,8.8 L10,8.8 L10,6.5"/></svg>
<div class="th" style="left:158px;top:885px">SOURCE</div>
<div class="th" style="left:1329.5px;top:885px">VIEWS</div>
<div class="th" style="left:1572px;top:885px">%</div>

<!-- report tab -->
<div class="abs" style="left:1586px;top:578.5px;width:20px;height:51.5px;background:#b4530f;border-radius:5px 0 0 5px;border:1px solid #dfe8f0"></div>
<svg class="abs" style="left:1590px;top:584px" width="8" height="9" viewBox="0 0 8 9"><ellipse cx="4" cy="5" rx="3" ry="3.5" fill="#fff"/><path d="M4,2 L4,8.5" stroke="#b4530f" stroke-width="0.8"/><path d="M1.5,4.5 L6.5,4.5" stroke="#b4530f" stroke-width="0.8"/></svg>
<div class="t" style="left:1595px;top:597.5px;font-size:8px;font-weight:700;color:#fff;transform-origin:0 0;transform:rotate(90deg) translate(0,-4px)">Report</div>
</body></html>
